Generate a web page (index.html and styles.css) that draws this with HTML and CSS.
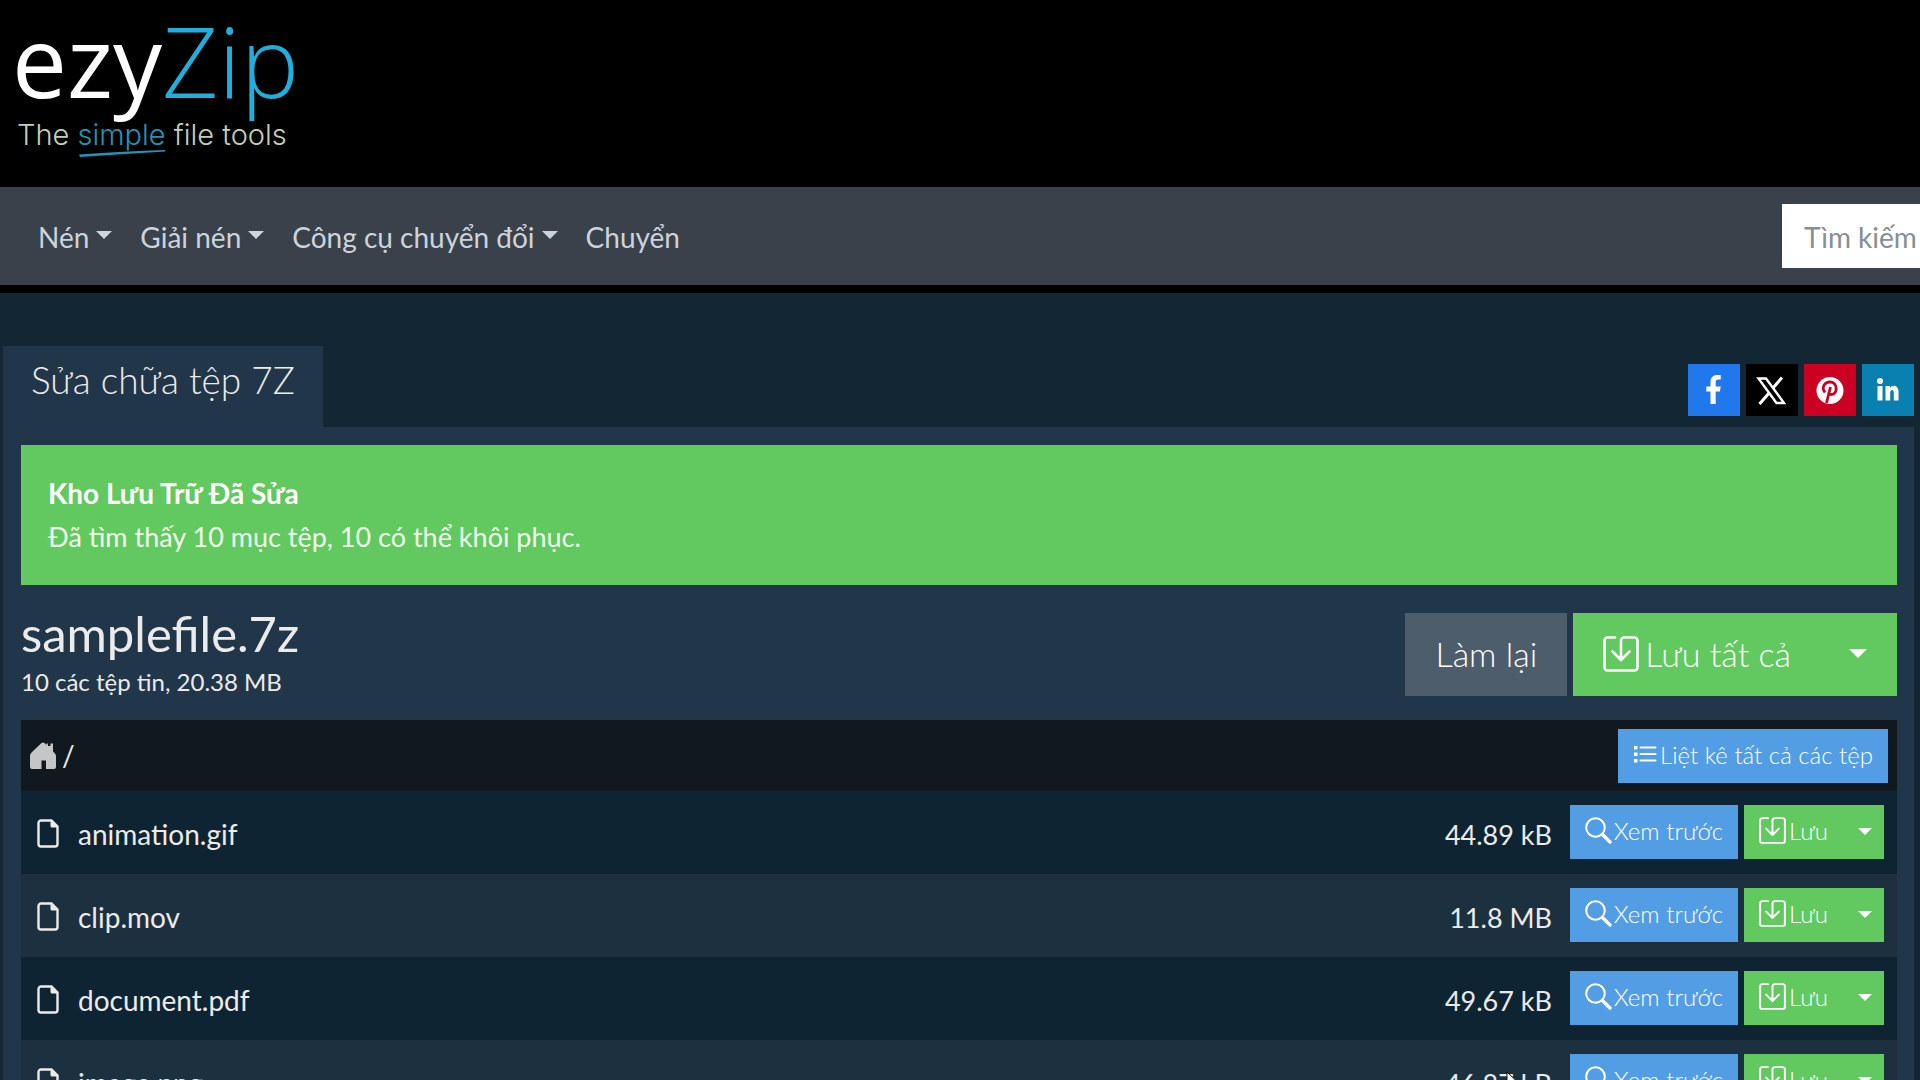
FILE: index.html
```html
<!DOCTYPE html>
<html lang="vi">
<head>
    <meta charset="UTF-8">
    <meta name="viewport" content="width=device-width, initial-scale=1">
    <title>Sửa chữa tệp 7Z - ezyZip</title>
    <link rel="stylesheet" href="styles.css">
</head>
<body>

<svg class="sprite" aria-hidden="true">
    <symbol id="icon-file" viewBox="0 0 22 29">
        <path d="M4 1.500h10.500l6 6V25a2.500 2.500 0 0 1-2.500 2.500H4A2.500 2.500 0 0 1 1.500 25V4A2.500 2.500 0 0 1 4 1.500z" fill="none" stroke="currentColor" stroke-width="2.400"/>
        <path d="M13.500 1.500v5.500a1.500 1.500 0 0 0 1.500 1.500h6z" fill="currentColor"/>
    </symbol>
    <symbol id="icon-save" viewBox="0 0 36 36">
        <path d="M12 1.500H4.500a3 3 0 0 0-3 3v27a3 3 0 0 0 3 3h27a3 3 0 0 0 3-3v-27a3 3 0 0 0-3-3H21a3 3 0 0 0-3 3V23M9.500 15.500l8.500 8.500 8.500-8.500" fill="none" stroke="currentColor" stroke-width="2.600" stroke-linecap="round" stroke-linejoin="round"/>
    </symbol>
    <symbol id="icon-search" viewBox="0 0 27 27">
        <circle cx="10.500" cy="10.500" r="9.300" fill="none" stroke="currentColor" stroke-width="2"/>
        <path d="M17.500 17.500l7.500 7.500" stroke="currentColor" stroke-width="3.400" stroke-linecap="round"/>
    </symbol>
    <symbol id="icon-list" viewBox="0 0 24 18">
        <path d="M7.500 2.500h15M7.500 9h15M7.500 15.500h15" stroke="currentColor" stroke-width="2" stroke-linecap="round"/>
        <path d="M1 1h3.500v3.500H1zM1 7.500h3.500v3.500H1zM1 14h3.500v3.500H1z" fill="currentColor"/>
    </symbol>
    <symbol id="icon-home" viewBox="0 0 26 27">
        <path d="M1.500 10.500 11.500 1q1.500-1.200 3 0l2 2V1.500h1.500v2.500h2.500V1.500H23V9.500l2 2q1 1 1 2.500V25q0 2-2 2h-8v-8.500h-4.500V27H2q-2 0-2-2V14q0-2 1.500-3.500z" fill="currentColor"/>
    </symbol>
</svg>

<header class="header">
    <a class="logo" href="#">
        <span class="logo-name">ezy<span>Zip</span></span>
        <span class="logo-slogan">The <em>simple</em> file tools</span>
        <svg class="logo-line" viewBox="0 0 86 7" aria-hidden="true"><path d="M0 4.500Q45 1 86 0v1.500Q45 4 1 7z" fill="#2294b5"/></svg>
    </a>
</header>

<nav class="navbar">
    <ul class="menu">
        <li><a class="caret" href="#">Nén</a></li>
        <li><a class="caret" href="#">Giải nén</a></li>
        <li><a class="caret" href="#">Công cụ chuyển đổi</a></li>
        <li><a href="#">Chuyển</a></li>
    </ul>
    <input class="search" type="search" placeholder="Tìm kiếm" aria-label="Tìm kiếm">
</nav>

<main class="main">
    <div class="top">
        <h1 class="tab">Sửa chữa tệp 7Z</h1>
        <div class="share">
            <a class="facebook" href="#" aria-label="Facebook"><svg viewBox="0 0 52 52"><path d="M22.500 40V27.500h-4.200v-5h4.200v-4.200c0-5 2.800-7.300 7-7.300h3.200v4.500h-2.400c-2 0-2.600 1-2.600 2.700v4.300h5l-.8 5h-4.200V40z" fill="#fff"/></svg></a>
            <a class="twitter" href="#" aria-label="X"><svg viewBox="0 0 52 52"><path d="M12.500 14.500h7.500l18 24.500h-7.500z" fill="none" stroke="#fff" stroke-width="2.400"/><path d="M36 13.500 27 24M23.500 28.500l-10 11.500" stroke="#fff" stroke-width="3"/></svg></a>
            <a class="pinterest" href="#" aria-label="Pinterest"><svg viewBox="0 0 52 52"><circle cx="26" cy="26.500" r="13.500" fill="#fff"/><path d="M22.500 39l4-16M21 28.500c-4.500-6 .5-10.500 5-10.500 8 0 8 12.500 1.500 12.500-1.500 0-2.700-.7-3-2" fill="none" stroke="#cc0022" stroke-width="2.800"/></svg></a>
            <a class="linkedin" href="#" aria-label="LinkedIn"><svg viewBox="0 0 52 52"><circle cx="18" cy="17" r="3" fill="#fff"/><path d="M15.500 22h5v14.500h-5zM23.500 22h4.500v2c2.500-3.800 8.500-3 8.500 3.500v9h-4.700V28.500c0-3.500-3.600-3.200-3.600 0v8h-4.700z" fill="#fff"/></svg></a>
        </div>
    </div>

    <section class="panel">
        <div class="alert" role="status">
            <strong>Kho Lưu Trữ Đã Sửa</strong>
            <p>Đã tìm thấy 10 mục tệp, 10 có thể khôi phục.</p>
        </div>

        <div class="archive">
            <div>
                <h2>samplefile.7z</h2>
                <p>10 các tệp tin, 20.38 MB</p>
            </div>
            <div class="actions">
                <button class="btn btn-lg gray" type="button">Làm lại</button>
                <div class="split">
                    <button class="btn btn-lg green" type="button"><svg class="save"><use href="#icon-save"/></svg>Lưu tất cả</button>
                    <button class="btn btn-lg green caret" type="button" aria-label="Thêm"></button>
                </div>
            </div>
        </div>

        <div class="path">
            <a href="#" aria-label="Trang chủ"><svg class="home"><use href="#icon-home"/></svg></a>
            <span>/</span>
            <button class="btn blue" type="button"><svg class="list"><use href="#icon-list"/></svg>Liệt kê tất cả các tệp</button>
        </div>

        <table class="files">
            <tr>
                <td class="icon"><svg class="file"><use href="#icon-file"/></svg></td>
                <td class="name">animation.gif</td>
                <td class="size">44.89 kB</td>
                <td class="tools">
                    <div class="actions">
                        <button class="btn blue" type="button"><svg class="zoom"><use href="#icon-search"/></svg>Xem trước</button>
                        <div class="split">
                            <button class="btn green" type="button"><svg class="save"><use href="#icon-save"/></svg>Lưu</button>
                            <button class="btn green caret" type="button" aria-label="Thêm"></button>
                        </div>
                    </div>
                </td>
            </tr>
            <tr>
                <td class="icon"><svg class="file"><use href="#icon-file"/></svg></td>
                <td class="name">clip.mov</td>
                <td class="size">11.8 MB</td>
                <td class="tools">
                    <div class="actions">
                        <button class="btn blue" type="button"><svg class="zoom"><use href="#icon-search"/></svg>Xem trước</button>
                        <div class="split">
                            <button class="btn green" type="button"><svg class="save"><use href="#icon-save"/></svg>Lưu</button>
                            <button class="btn green caret" type="button" aria-label="Thêm"></button>
                        </div>
                    </div>
                </td>
            </tr>
            <tr>
                <td class="icon"><svg class="file"><use href="#icon-file"/></svg></td>
                <td class="name">document.pdf</td>
                <td class="size">49.67 kB</td>
                <td class="tools">
                    <div class="actions">
                        <button class="btn blue" type="button"><svg class="zoom"><use href="#icon-search"/></svg>Xem trước</button>
                        <div class="split">
                            <button class="btn green" type="button"><svg class="save"><use href="#icon-save"/></svg>Lưu</button>
                            <button class="btn green caret" type="button" aria-label="Thêm"></button>
                        </div>
                    </div>
                </td>
            </tr>
            <tr>
                <td class="icon"><svg class="file"><use href="#icon-file"/></svg></td>
                <td class="name">image.png</td>
                <td class="size">46.87 kB</td>
                <td class="tools">
                    <div class="actions">
                        <button class="btn blue" type="button"><svg class="zoom"><use href="#icon-search"/></svg>Xem trước</button>
                        <div class="split">
                            <button class="btn green" type="button"><svg class="save"><use href="#icon-save"/></svg>Lưu</button>
                            <button class="btn green caret" type="button" aria-label="Thêm"></button>
                        </div>
                    </div>
                </td>
            </tr>
        </table>
    </section>
</main>

<svg class="cursor" viewBox="0 0 20 30" aria-hidden="true"><path d="M1 1v24l6-5 4 8 4-2-4-8h8z" fill="#fff" stroke="#111" stroke-width="1"/></svg>

</body>
</html>
```

FILE: styles.css
```css
* { box-sizing: border-box; margin: 0; padding: 0; }
body { height: 100vh; overflow: hidden; background: #122633; color: #ebebeb; font-family: Lato, "Noto Sans", sans-serif; font-size: 28px; line-height: 43px; }
a { color: inherit; text-decoration: none; }
.sprite { position: absolute; width: 0; height: 0; }

/* header */
.header { height: 187px; padding: 16px 12px; background: #000; }
.logo { position: relative; display: inline-block; font-family: "Open Sans", "Noto Sans", sans-serif; }
.logo-name { display: block; color: #fff; font-size: 98px; line-height: 88px; }
.logo-name span { color: #22aedb; font-weight: 300; }
.logo-slogan { display: block; margin-top: 15px; padding-left: 5px; color: #c5cdb9; font-family: Inter, sans-serif; font-size: 29px; font-weight: 300; line-height: 32px; }
.logo-slogan em { color: #2294b5; font-style: normal; }
.logo-line { position: absolute; left: 67px; bottom: -6px; width: 86px; height: 7px; }

/* navbar */
.navbar { display: flex; align-items: center; justify-content: space-between; height: 106px; padding-left: 24px; background: #39424a; border-bottom: 8px solid #000; overflow: hidden; }
.menu { display: flex; list-style: none; }
.menu a { display: block; padding: 2px 14px 0; color: #cdd3dc; }
.caret::after { content: ""; display: inline-block; margin-left: 7px; vertical-align: 9px; border-top: 8px solid; border-left: 8px solid transparent; border-right: 8px solid transparent; }
.search { flex: none; width: 260px; height: 64px; margin-right: -122px; padding: 2px 22px 0; border: 0; background: #fff; font: inherit; color: #444; }
.search::placeholder { color: #868e96; }

/* tab + share */
.main { padding: 53px 6px 0 3px; }
.top { display: flex; justify-content: space-between; align-items: flex-start; }
.tab { height: 81px; padding: 10px 28px; background: #22364a; font-size: 37px; font-weight: 300; line-height: 47px; }
.share { display: flex; gap: 6px; padding-top: 18px; }
.share a { width: 52px; height: 52px; }
.share svg { display: block; }
.facebook { background: #2078ec; }
.twitter { background: #000; }
.pinterest { background: #cc0022; }
.linkedin { background: #0a80b0; }

.panel { padding: 18px 17px 18px 18px; background: #22364a; }
.alert { padding: 27px; background: #62c960; color: #effcec; }
.alert strong { color: #fff; }
.alert p { font-size: 27px; }
.archive { display: flex; justify-content: space-between; padding: 28px 0 19px; }
.archive h2 { font-size: 49px; font-weight: 400; line-height: 40px; }
.archive p { margin-top: 10px; font-size: 24px; line-height: 38px; }

/* buttons */
.actions { display: flex; gap: 6px; }
.split { display: flex; }
.btn { display: flex; align-items: center; height: 54px; padding: 0 15px 3px; border: 0; color: #fff; font-family: inherit; font-size: 24px; font-weight: 300; white-space: nowrap; cursor: pointer; }
.btn .save { width: 27px; height: 27px; margin-right: 3px; }
.btn.caret { padding: 0 12px 0 15px; }
.btn.caret::after { margin: 0; border-width: 7px 7px 0; }
.btn-lg { height: 83px; padding: 0 30px 2px; font-size: 34px; }
.btn-lg .save { width: 36px; height: 36px; margin-right: 6px; }
.btn-lg.caret { padding: 0 30px 2px 28px; }
.btn-lg.caret::after { border-width: 9px 9px 0; }
.blue { background: #529de3; }
.green { background: #62c960; }
.gray { background: #4e5d6c; }
.zoom { width: 27px; height: 27px; margin-right: 2px; }
.list { width: 24px; height: 18px; margin-right: 3px; }

/* files */
.path { display: flex; align-items: center; gap: 6px; height: 71px; padding: 0 9px; background: #11181e; }
.path .btn { margin-left: auto; }
.home { display: block; width: 26px; height: 27px; color: #c4c6c8; }
.files { width: 100%; border-collapse: collapse; }
.files tr { height: 83px; background: #1d3040; }
.files tr:nth-child(odd) { background: #0f2432; }
.files .icon { width: 57px; padding: 2px 0 0 16px; }
.file { display: block; width: 22px; height: 29px; }
.name, .size { padding-top: 3px; }
.size { font-size: 27px; text-align: right; }
.tools { width: 345px; padding: 0 13px 2px 17px; }
.tools .actions { justify-content: flex-end; }

.cursor { position: absolute; left: 1506px; top: 1071px; width: 20px; height: 30px; }
```
